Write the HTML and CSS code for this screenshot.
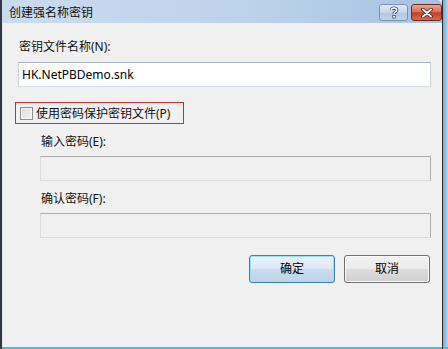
FILE: index.html
```html
<!DOCTYPE html>
<html lang="zh-CN">
<head>
    <meta charset="UTF-8">
    <meta name="viewport" content="width=device-width, initial-scale=1.0">
    <title>创建强名称密钥</title>
    <link rel="stylesheet" href="styles.css">
</head>
<body>
    <div class="screen">
        <div class="window">
            <div class="titlebar">
                <span class="title">创建强名称密钥</span>
                <span class="tb-btn help">
                    <svg width="12" height="13" viewBox="0 0 12 13">
                        <path d="M3.3 4.2 C3.3 1.3 8.7 1.3 8.7 4.2 C8.7 6 6 6 6 8" fill="none" stroke="#3a4f6a" stroke-width="3.2"/>
                        <path d="M3.3 4.2 C3.3 1.3 8.7 1.3 8.7 4.2 C8.7 6 6 6 6 8" fill="none" stroke="#fff" stroke-width="1.5"/>
                        <rect x="4.7" y="9.4" width="2.6" height="2.6" fill="#fff" stroke="#3a4f6a" stroke-width="0.8"/>
                    </svg>
                </span>
                <span class="tb-btn close">
                    <svg width="14" height="10" viewBox="0 0 14 10">
                        <path d="M3 1.5 L11 8.5 M11 1.5 L3 8.5" stroke="#5a1d12" stroke-width="3.6" stroke-linecap="round"/>
                        <path d="M3 1.5 L11 8.5 M11 1.5 L3 8.5" stroke="#fff" stroke-width="2" stroke-linecap="round"/>
                    </svg>
                </span>
            </div>
            <div class="client">
                <div class="label">密钥文件名称(N):</div>
                <div class="textbox">HK.NetPBDemo.snk</div>
                <div class="check-row">
                    <span class="checkbox"></span>
                    <span>使用密码保护密钥文件(P)</span>
                </div>
                <div class="group">
                    <div class="label">输入密码(E):</div>
                    <div class="textbox disabled"></div>
                    <div class="label second">确认密码(F):</div>
                    <div class="textbox disabled"></div>
                </div>
                <div class="buttons">
                    <span class="btn default">确定</span>
                    <span class="btn">取消</span>
                </div>
            </div>
            <div class="bottom-edge"></div>
        </div>
        <div class="backdrop"></div>
    </div>
</body>
</html>
```
FILE: styles.css
```css
*{
    margin: 0;
    padding: 0;
    box-sizing: border-box;
}
body{
    width: 448px;
    height: 349px;
    overflow: hidden;
    font-family: "Noto Sans", "Noto Sans CJK SC", sans-serif;
    font-size: 12px;
    color: #111;
    background: #f0f0f0;
}
.screen{
    display: flex;
    height: 349px;
}
.window{
    width: 443px;
    display: flex;
    flex-direction: column;
    border-left: 2px solid #34383d;
    border-right: 1px solid #2c2f33;
}
.titlebar{
    height: 23px;
    display: flex;
    align-items: flex-start;
    padding-left: 7px;
    background: linear-gradient(90deg, #cadbef 0%, #bdd2eb 55%, #a7c2e2 100%);
    border-top-right-radius: 5px;
}
.title{
    line-height: 16px;
    margin-top: 5px;
    color: #111;
}
.tb-btn{
    height: 17px;
    margin-top: 4px;
    display: flex;
    align-items: center;
    justify-content: center;
    border-radius: 3px;
}
.help{
    width: 29px;
    margin-left: auto;
    border: 1px solid #7a93b3;
    background: linear-gradient(#dde8f5 0%, #c6d7eb 50%, #b0c6e1 51%, #bfd4eb 100%);
}
.close{
    width: 31px;
    margin-left: 3px;
    border: 1px solid #6e2a1e;
    background: linear-gradient(#e9a696 0%, #d5715c 45%, #c0402a 52%, #d86a4c 100%);
}
.client{
    flex: 1;
    background: #f0f0f0;
    padding: 16px 11px 0 15px;
    border-left: 1px solid #dde6f0;
}
.label{
    line-height: 16px;
    padding-left: 1px;
}
.textbox{
    height: 25px;
    margin-top: 7px;
    background: #fff;
    border: 1px solid;
    border-color: #a7b3c2 #c9d3df #d7dee6 #c9d3df;
    font-size: 12px;
    line-height: 23px;
    padding-left: 3px;
    color: #000;
}
.check-row{
    width: 169px;
    height: 22px;
    margin: 15px 0 0 -3px;
    border: 1px solid #c7302c;
    display: flex;
    align-items: center;
    gap: 3px;
    padding-left: 4px;
}
.checkbox{
    width: 13px;
    height: 13px;
    border: 1px solid #8f8f8f;
    background: linear-gradient(135deg, #d9d9d9, #f6f6f6);
    box-shadow: inset 0 0 0 1px #f4f4f4;
}
.group{
    padding-left: 22px;
    margin-top: 10px;
}
.group .textbox{
    margin-top: 6px;
}
.group .second{
    margin-top: 10px;
}
.textbox.disabled{
    background: #f0f0f0;
    border-color: #acacac #acacac #dcdcdc #dcdcdc;
}
.buttons{
    display: flex;
    justify-content: flex-end;
    gap: 9px;
    margin-top: 17px;
    margin-right: 1px;
}
.btn{
    width: 86px;
    height: 28px;
    border: 1px solid #707070;
    border-radius: 3px;
    background: linear-gradient(#f3f3f3 0%, #ebebeb 48%, #dddddd 52%, #cfcfcf 100%);
    box-shadow: inset 0 0 0 1px #fbfbfb;
    text-align: center;
    line-height: 26px;
    color: #000;
}
.btn.default{
    border-color: #3c7fb1;
    background: linear-gradient(#eaf3fb 0%, #dbe8f5 48%, #cbdcee 52%, #bed2e8 100%);
    box-shadow: inset 0 0 0 1px #9fdcf5;
}
.bottom-edge{
    height: 2px;
    background: #3fc2d8;
}
.backdrop{
    flex: 1;
    background: linear-gradient(90deg, #7aa9d6, #b9d4ec);
    border-bottom: 2px solid #3fc2d8;
}
```
